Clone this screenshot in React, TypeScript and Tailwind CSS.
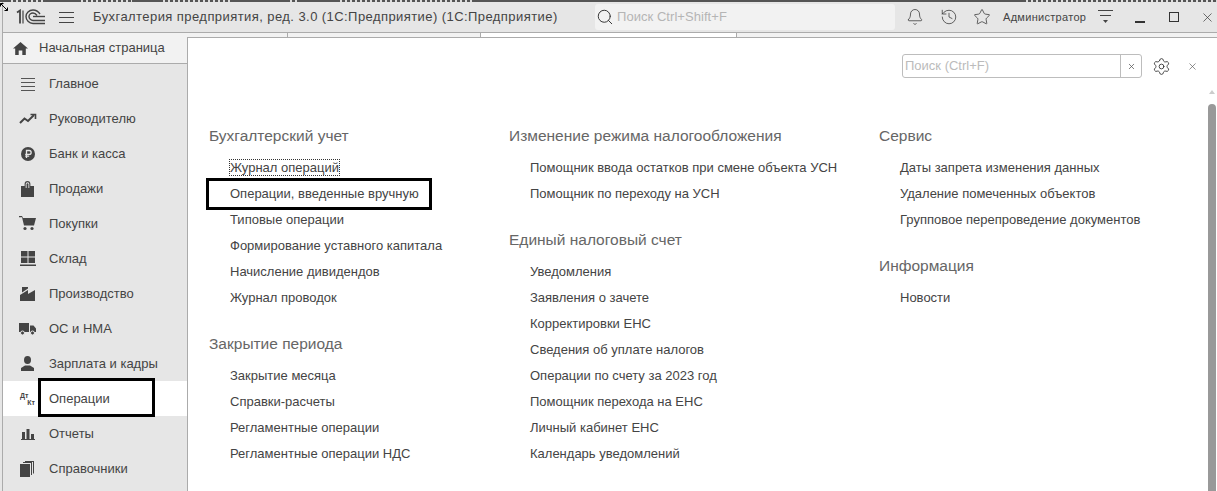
import { Bell, History, Star, X, Settings, Search } from "lucide-react";
import type { ReactNode } from "react";

const SIDE_ITEMS: { label: string; icon: ReactNode; active?: boolean }[] = [
  {
    label: "Главное",
    icon: (
      <svg width="16" height="16" viewBox="0 0 16 16" stroke="#555" strokeWidth="1">
        <path d="M1 2.500h14M1 6.500h14M1 10.500h14M1 14.500h14" />
      </svg>
    ),
  },
  {
    label: "Руководителю",
    icon: (
      <svg width="18" height="12" viewBox="0 0 18 12" fill="none" stroke="#444" strokeWidth="2">
        <path d="M1 10l4.500-4.500 3.500 2.500 6-6" />
        <path d="M11.500 1.500h5v4.500" strokeWidth="1.600" />
      </svg>
    ),
  },
  {
    label: "Банк и касса",
    icon: (
      <svg width="14" height="14" viewBox="0 0 14 14">
        <circle cx="7" cy="7" r="7" fill="#444" />
        <path d="M5.500 11V3.500h2.700a1.900 1.900 0 0 1 0 3.900H4.200M4.200 9.200h4" fill="none" stroke="#e6e6e6" strokeWidth="1.300" />
      </svg>
    ),
  },
  {
    label: "Продажи",
    icon: (
      <svg width="13" height="16" viewBox="0 0 13 16">
        <path d="M0 5h3.600V3a2.900 2.900 0 0 1 5.800 0v2H13v11H0z" fill="#444" />
        <path d="M4.700 7V3a1.800 1.800 0 0 1 3.600 0v4" fill="#e6e6e6" />
        <path d="M5.600 7V3.200a.9.900 0 0 1 1.800 0V7z" fill="#444" />
      </svg>
    ),
  },
  {
    label: "Покупки",
    icon: (
      <svg width="17" height="15" viewBox="0 0 17 15">
        <path d="M0 0h3l1 2h13l-2 7.500H5L3 1.200H0z" fill="#444" />
        <circle cx="6" cy="12.500" r="1.600" fill="#444" />
        <circle cx="13" cy="12.500" r="1.600" fill="#444" />
      </svg>
    ),
  },
  {
    label: "Склад",
    icon: (
      <svg width="16" height="15" viewBox="0 0 16 15" fill="#444">
        <path d="M1 0h6.500v5.500H1zM8.500 0H15v5.500H8.500zM1 6.500h6.500V12H1zM8.500 6.500H15V12H8.500zM0 13.500h16V15H0z" />
      </svg>
    ),
  },
  {
    label: "Производство",
    icon: (
      <svg width="15" height="14" viewBox="0 0 15 14" fill="#444">
        <path d="M2 0h6v1.500L2 5.500z" />
        <path d="M0 14V8l8-5v4l7-4v11z" />
      </svg>
    ),
  },
  {
    label: "ОС и НМА",
    icon: (
      <svg width="17" height="13" viewBox="0 0 17 13" fill="#444">
        <path d="M0 1h10v9H0zM11 3.500h3.500L17 6.500V10h-6z" />
        <circle cx="3.500" cy="11" r="2" stroke="#e6e6e6" />
        <circle cx="13.500" cy="11" r="2" stroke="#e6e6e6" />
      </svg>
    ),
  },
  {
    label: "Зарплата и кадры",
    icon: (
      <svg width="13" height="15" viewBox="0 0 13 15" fill="#444">
        <ellipse cx="6.500" cy="4" rx="3.500" ry="4" />
        <path d="M0 15v-3l4-2.500h5l4 2.500v3z" />
      </svg>
    ),
  },
  {
    label: "Операции",
    active: true,
    icon: (
      <span className="flex flex-col text-[7px] leading-[7px] font-bold text-[#444] w-[15px]">
        <span>Дт</span>
        <span className="self-end">Кт</span>
      </span>
    ),
  },
  {
    label: "Отчеты",
    icon: (
      <svg width="14" height="12" viewBox="0 0 14 12" fill="#444">
        <path d="M1 4h3v7H1zM5.500 1h3v10h-3zM10 6h3v5h-3zM0 11h14v1H0z" />
      </svg>
    ),
  },
  {
    label: "Справочники",
    icon: (
      <svg width="15" height="16" viewBox="0 0 15 16" fill="#444">
        <path d="M0 3h10v13H0z" />
        <path d="M11.500 2v12M13.500 .5v12M3 1.500h9M5 .5h9" stroke="#444" fill="none" strokeWidth="1" />
      </svg>
    ),
  },
];

const COLUMNS = [
  {
    className: "w-[300px]",
    groups: [
      {
        title: "Бухгалтерский учет",
        links: [
          "Журнал операций",
          "Операции, введенные вручную",
          "Типовые операции",
          "Формирование уставного капитала",
          "Начисление дивидендов",
          "Журнал проводок",
        ],
      },
      {
        title: "Закрытие периода",
        links: ["Закрытие месяца", "Справки-расчеты", "Регламентные операции", "Регламентные операции НДС"],
      },
    ],
  },
  {
    className: "w-[370px]",
    groups: [
      {
        title: "Изменение режима налогообложения",
        links: ["Помощник ввода остатков при смене объекта УСН", "Помощник по переходу на УСН"],
      },
      {
        title: "Единый налоговый счет",
        links: [
          "Уведомления",
          "Заявления о зачете",
          "Корректировки ЕНС",
          "Сведения об уплате налогов",
          "Операции по счету за 2023 год",
          "Помощник перехода на ЕНС",
          "Личный кабинет ЕНС",
          "Календарь уведомлений",
        ],
      },
    ],
  },
  {
    className: "flex-1",
    groups: [
      {
        title: "Сервис",
        links: ["Даты запрета изменения данных", "Удаление помеченных объектов", "Групповое перепроведение документов"],
      },
      { title: "Информация", links: ["Новости"] },
    ],
  },
];

// scraps of the window behind, visible along the very top edge
const TOP_STRIP = [
  { w: 8, dash: false },
  { w: 38, dash: true },
  { w: 32, dash: false },
  { w: 54, dash: true },
  { w: 28, dash: false },
  { w: 72, dash: true },
  { w: 55, dash: false },
  { w: 11, dash: true },
  { w: 39, dash: false },
  { w: 136, dash: true },
  { w: 550, dash: false },
  { w: 194, dash: true },
];

function OneCLogo() {
  return (
    <svg width="30" height="16" viewBox="0 0 30 16" fill="none" stroke="#444" strokeWidth="1.400">
      <path d="M1 3.500l3-2v13" strokeWidth="1.800" />
      <path d="M7 14.500V1.500" strokeWidth="1.200" />
      <path d="M24 5c-2-3-4-4-7-4-4 0-7 3-7 6.500s3 7 7 7h12" />
      <path d="M21 6.500c-1-1.500-2.500-2.500-4-2.500-2 0-4 1.500-4 3.500s2 4 4 4h12" />
      <path d="M17 7.500h12" />
    </svg>
  );
}

function TitleBar() {
  return (
    <div className="flex items-center h-[30px] pl-[13px] bg-[#e6e6e6] border-b border-[#ababab] box-content">
      <OneCLogo />
      <svg className="ml-[13px]" width="15" height="13" viewBox="0 0 15 13" stroke="#444" strokeWidth="1">
        <path d="M0 1.500h15M0 6.500h15M0 11.500h15" />
      </svg>
      <span className="ml-[19px] text-[13px] text-[#444] tracking-[0.43px] whitespace-nowrap w-[502px]">
        Бухгалтерия предприятия, ред. 3.0 (1С:Предприятие) (1С:Предприятие)
      </span>
      <div className="flex items-center gap-[3px] w-[300px] h-[26px] rounded-[3px] bg-[#f2f2f2] pl-[1px]">
        <Search size={18} color="#333" strokeWidth={1.300} />
        <span className="text-[13px] tracking-[0.05px] text-[#b5b5b5]">Поиск Ctrl+Shift+F</span>
      </div>
      <Bell size={18} color="#333" strokeWidth={1} className="ml-[11px]" />
      <History size={18} color="#333" strokeWidth={1} className="ml-[16px]" />
      <Star size={18} color="#333" strokeWidth={1} className="ml-[15px]" />
      <span className="ml-[12px] text-[11px] text-[#444] tracking-[0.3px] whitespace-nowrap w-[95px]">Администратор</span>
      <svg width="15" height="15" viewBox="0 0 15 15" fill="#444">
        <path d="M0 0h15v1H0zM2 5h11v1H2z" />
        <path d="M5 10h5l-2.500 3z" />
      </svg>
      <div className="ml-[22px] w-[10px] h-[1.500px] bg-[#333] translate-y-[5px]" />
      <div className="ml-[24px] w-[10px] h-[10px] border-[1.500px] border-[#333]" />
      <X size={15} color="#333" strokeWidth={1.100} className="ml-[21px]" />
    </div>
  );
}

function SidePanel() {
  return (
    <aside className="w-[184px] shrink-0 flex flex-col bg-[#e6e6e6] overflow-hidden">
      <div className="flex items-center h-[30px] w-[174px] shrink-0 bg-[#f2f2f2] border-r border-b border-[#ababab] pl-[10px] box-content">
        <svg width="15" height="13" viewBox="0 0 15 13" fill="#444">
          <path d="M7.500 0L15 6.500h-2.200V13H9.300V8.500H5.700V13H2.200V6.500H0z" />
        </svg>
        <span className="ml-[11px] text-[13px] text-[#444]">Начальная страница</span>
      </div>
      <div className="pt-[2px]">
        {SIDE_ITEMS.map((item) => (
          <div
            key={item.label}
            className={`flex items-center h-[35px] ${item.active ? "bg-white" : ""}`}
          >
            <span className="flex items-center justify-center w-[46px] pl-[3px] shrink-0">{item.icon}</span>
            <span className="text-[13px] text-[#444] whitespace-nowrap">{item.label}</span>
          </div>
        ))}
      </div>
    </aside>
  );
}

function ContentPanel() {
  return (
    <div className="flex flex-col flex-1 min-w-0">
      <div className="flex h-[4px] shrink-0 bg-[#f2f2f2]">
        <div className="w-[101px] border-r border-[#ababab]" />
        <div className="w-[193px] border-r border-[#ababab]" />
        <div className="w-[256px] bg-white border-r border-[#ababab]" />
      </div>
      <main className="relative flex-1 min-h-0 bg-white border-l border-t border-[#ababab] overflow-hidden">
        <div className="flex items-center h-[26px] mt-[15px] pl-[714px]">
          <div className="flex w-[240px] h-[24px] border border-[#bdbdbd] rounded-[3px]">
            <span className="flex-1 pl-[2px] text-[13px] leading-[22px] text-[#bbb] border-r border-[#bdbdbd]">Поиск (Ctrl+F)</span>
            <span className="flex items-center justify-center w-[20px]">
              <X size={9} color="#555" strokeWidth={2} />
            </span>
          </div>
          <Settings size={19} color="#333" strokeWidth={1.100} className="ml-[10px]" />
          <X size={11} color="#555" strokeWidth={1.400} className="ml-[16px]" />
        </div>
        <div className="flex pl-[21px] mt-[45px]">
          {COLUMNS.map((col, i) => (
            <div key={i} className={col.className}>
              {col.groups.map((g) => (
                <div key={g.title} className="mb-[21px] last:mb-0">
                  <h2 className="text-[15.500px] leading-[24px] text-[#666] mb-[7px] whitespace-nowrap">{g.title}</h2>
                  {g.links.map((l) => (
                    <div key={l} className="pl-[21px] h-[26px] text-[13px] leading-[26px] text-[#444] whitespace-nowrap">
                      {l === "Журнал операций" ? (
                        <span className="outline-1 outline-dotted outline-[#333]">{l}</span>
                      ) : (
                        l
                      )}
                    </div>
                  ))}
                </div>
              ))}
            </div>
          ))}
        </div>
        {/* scrollbar */}
        <div className="absolute right-[1px] top-[52px] flex flex-col items-center gap-[10px]">
          <div className="w-0 h-0 border-x-[3px] border-x-transparent border-b-[4px] border-b-[#ccc]" />
          <div className="w-[8px] h-[400px] rounded-full bg-[#999]" />
        </div>
      </main>
    </div>
  );
}

export default function App() {
  return (
    <div className="relative flex flex-col w-[1217px] h-[491px] overflow-hidden bg-[#e6e6e6] font-['Liberation_Sans',Arial,sans-serif]">
      <div className="flex h-[2px] shrink-0 bg-[#555]">
        {TOP_STRIP.map((s, i) => (
          <div
            key={i}
            style={{ width: s.w }}
            className={s.dash ? "bg-[repeating-linear-gradient(90deg,#555_0,#555_3px,#ddd_3px,#ddd_5px)]" : ""}
          />
        ))}
      </div>
      <div className="flex flex-col flex-1 min-h-0 ml-[2px] border-l border-[#ababab]">
        <TitleBar />
        <div className="flex flex-1 min-h-0">
          <SidePanel />
          <ContentPanel />
        </div>
      </div>
      {/* resize cursor caught in the corner */}
      <svg className="absolute left-0 top-[3px]" width="8" height="8" viewBox="0 0 8 8" fill="none" stroke="#000" strokeWidth="1">
        <path d="M.5.500h3M.5.500v3M.5.500l7 7M7.500 7.500h-3M7.500 7.500v-3" />
      </svg>
      {/* annotation boxes drawn over the screenshot */}
      <div className="absolute left-[38px] top-[378px] w-[117px] h-[39px] border-[3px] border-black" />
      <div className="absolute left-[206px] top-[178px] w-[226px] h-[32px] border-[3px] border-black" />
    </div>
  );
}
